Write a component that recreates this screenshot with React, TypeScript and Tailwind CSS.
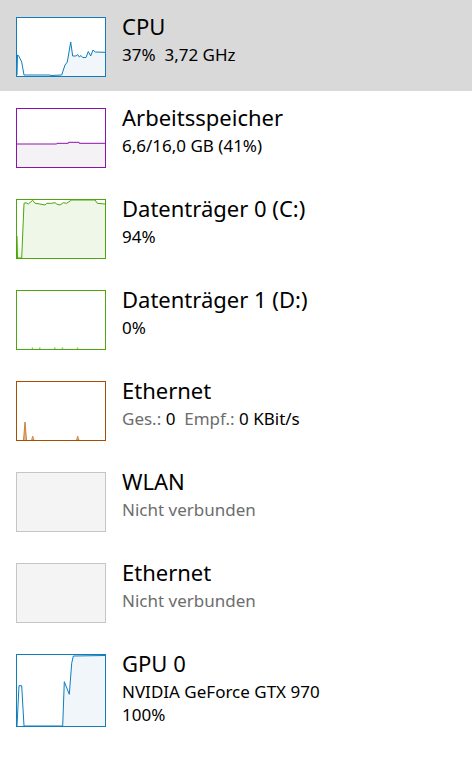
import React from "react";

type G = { stroke: string; fill: string; bg?: string; line?: string; area?: string; extra?: React.ReactNode; h?: number };

function Graph({ stroke, fill, bg = "#ffffff", line, area, extra, h = 60 }: G) {
  return (
    <svg width={90} height={h} viewBox={`0 0 90 ${h}`} className="shrink-0 block">
      <rect x={0} y={0} width={90} height={h} fill={bg} />
      {area && <polygon points={area} fill={fill} />}
      {line && <polyline points={line} fill="none" stroke={stroke} strokeWidth={1} strokeLinejoin="round" />}
      {extra}
      <rect x={0.5} y={0.5} width={89} height={h - 1} fill="none" stroke={stroke} strokeWidth={1} />
    </svg>
  );
}

const cpuLine =
  "1,58 1.5,38 2.5,38.5 5.7,45 8,58 34,58 35,58.5 45.7,58 49,48 51.3,45 54.7,25 56.7,39 60,39 61.7,37.5 63.3,40 65,38.5 66.7,40.5 70,40.5 72.3,34.5 74.7,39 77,33 79.3,35 89,35.3";
const cpuArea = "45.7,58 49,48 51.3,45 54.7,25 56.7,39 60,39 61.7,37.5 63.3,40 65,38.5 66.7,40.5 70,40.5 72.3,34.5 74.7,39 77,33 79.3,35 89,35.3 89,59 45.7,59";

const memLine = "1,36 40.7,36 41,35.3 52.3,35.3 52.5,34.3 63,34.3 63.2,35.3 89,35.3";
const memArea = "1,36 40.7,36 41,35.3 52.3,35.3 52.5,34.3 63,34.3 63.2,35.3 89,35.3 89,59 1,59";

const d0Line =
  "1,37 1.5,59 5.7,59 8,4.3 10,3.7 12.3,5 16.7,1.3 19,4.3 24,5 29,6 30.7,4.3 35.7,4.3 39,3.7 40.7,5 44,6 47.3,3.7 50.7,4.3 54,2 55.7,1 79,1 81.3,4.3 89,5";
const d0Area = d0Line + " 89,59 5.7,59";

const gpuLine = "1,72 3,31.7 5.7,31.7 8,72 46.7,72 48.3,27.7 53.3,40.3 55.7,9.3 57.3,2 89,1.5";
const gpuArea = "46.7,72 48.3,27.7 53.3,40.3 55.7,9.3 57.3,2 89,1.5 89,72";

function Row({
  graph,
  title,
  children,
  selected,
  tall,
}: {
  graph: React.ReactNode;
  title: string;
  children: React.ReactNode;
  selected?: boolean;
  tall?: boolean;
}) {
  return (
    <div className={`flex gap-4 pl-4 pt-[17px] ${tall ? "h-[110px]" : "h-[91px]"} ${selected ? "bg-[#d9d9d9] w-[472px]" : "w-full"}`}>
      {graph}
      <div className="flex flex-col">
        <div className="text-[22px] leading-[24px] text-black -mt-[3px]">{title}</div>
        <div className="text-[17px] leading-[23px] text-black mt-[5px]">{children}</div>
      </div>
    </div>
  );
}

export default function App() {
  const ticks = [15.7, 23, 38, 45.7, 60.7];
  return (
    <div
      className="w-[474px] h-[782px] bg-white overflow-hidden"
      style={{ fontFamily: '"Segoe UI", "Noto Sans", "Open Sans", sans-serif' }}
    >
      <Row selected title="CPU" graph={<Graph stroke="#117dbb" fill="#f1f6fa" line={cpuLine} area={cpuArea} />}>
        <span>37%&nbsp; 3,72 GHz</span>
      </Row>
      <Row title="Arbeitsspeicher" graph={<Graph stroke="#8b12ae" fill="#f4f2f4" line={memLine} area={memArea} />}>
        6,6/16,0 GB (41%)
      </Row>
      <Row title="Datenträger 0 (C:)" graph={<Graph stroke="#4da60c" fill="#eff7e9" line={d0Line} area={d0Area} />}>
        94%
      </Row>
      <Row
        title="Datenträger 1 (D:)"
        graph={
          <Graph
            stroke="#4da60c"
            fill="#eff7e9"
            extra={ticks.map((x) => (
              <rect key={x} x={x} y={57.5} width={1.5} height={1.5} fill="#8cc760" />
            ))}
          />
        }
      >
        0%
      </Row>
      <Row
        title="Ethernet"
        graph={
          <Graph
            stroke="#a74f01"
            fill="#f7efe8"
            extra={
              <>
                <polygon points="7.5,59 9,41 10.5,59" fill="#e3b68a" />
                <polyline points="7.5,59 9,41 10.5,59" fill="none" stroke="#c06a1a" strokeWidth={0.8} />
                <polygon points="15.5,59 16.7,55 18,59" fill="#e3b68a" stroke="#c06a1a" strokeWidth={0.6} />
                <polygon points="60.5,59 61.7,55 63,59" fill="#e3b68a" stroke="#c06a1a" strokeWidth={0.6} />
              </>
            }
          />
        }
      >
        <span className="text-[#6d6d6d]">Ges.:</span> 0&nbsp; <span className="text-[#6d6d6d]">Empf.:</span> 0 KBit/s
      </Row>
      <Row title="WLAN" graph={<Graph stroke="#c6c6c6" fill="#f4f4f4" bg="#f4f4f4" />}>
        <span className="text-[#6d6d6d]">Nicht verbunden</span>
      </Row>
      <Row title="Ethernet" graph={<Graph stroke="#c6c6c6" fill="#f4f4f4" bg="#f4f4f4" />}>
        <span className="text-[#6d6d6d]">Nicht verbunden</span>
      </Row>
      <Row tall title="GPU 0" graph={<Graph h={73} stroke="#117dbb" fill="#f1f6fa" line={gpuLine} area={gpuArea} />}>
        <div>NVIDIA GeForce GTX 970</div>
        <div>100%</div>
      </Row>
    </div>
  );
}
